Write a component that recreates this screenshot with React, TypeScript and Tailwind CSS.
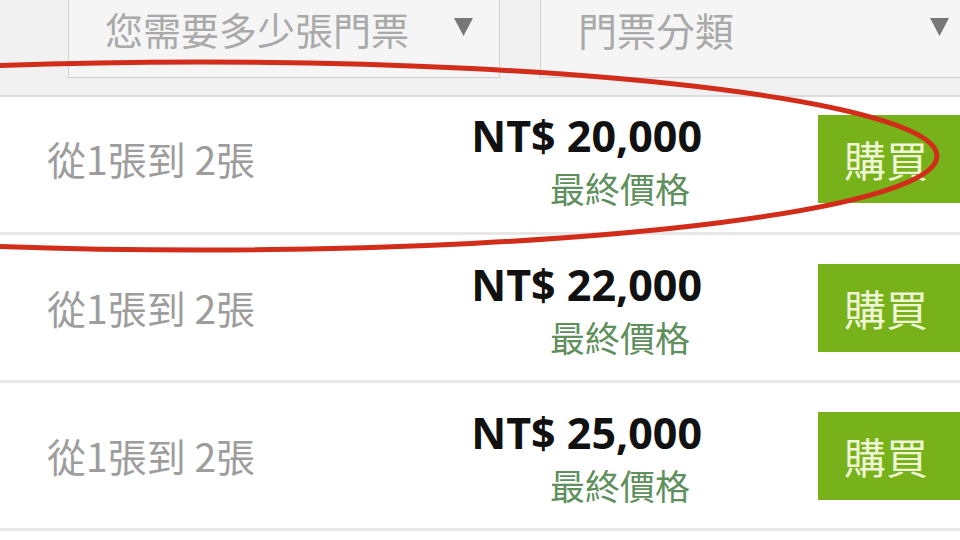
const rows = [
  { range: '從1張到 2張', price: 'NT$ 20,000' },
  { range: '從1張到 2張', price: 'NT$ 22,000' },
  { range: '從1張到 2張', price: 'NT$ 25,000' },
];

const cjk = { fontFamily: '"Noto Sans CJK TC", "Noto Sans", sans-serif' };
const latin = { fontFamily: '"Open Sans", "Noto Sans CJK TC", sans-serif' };

function Caret() {
  return (
    <svg width="21" height="20" viewBox="0 0 21 20" className="shrink-0">
      <polygon points="1,1 20,1 10.5,19" fill="#777" />
    </svg>
  );
}

export default function App() {
  return (
    <div className="relative w-[960px] h-[540px] overflow-hidden bg-white" style={cjk}>
      {/* filters (scrolled so their top edge is off screen) */}
      <div className="h-[97px] bg-[#f1f1f1] border-b-2 border-[#dcdcdc] flex items-start gap-[40px] pl-[68px]">
        <div className="w-[432px] shrink-0 h-[78px] bg-[#f5f5f5] border-x border-b border-[#cfcfcf] flex items-start pl-[36px] pr-[25px] pt-[9px]">
          <span className="text-[38px] text-[#a9a9a9] leading-[40px] flex-1 whitespace-nowrap">您需要多少張門票</span>
          <span className="pt-[8px]">
            <Caret />
          </span>
        </div>
        <div className="w-[440px] shrink-0 h-[78px] bg-[#f5f5f5] border-x border-b border-[#cfcfcf] flex items-start pl-[37px] pr-[29px] pt-[9px]">
          <span className="text-[39px] text-[#a9a9a9] leading-[40px] flex-1">門票分類</span>
          <span className="pt-[8px]">
            <Caret />
          </span>
        </div>
      </div>

      {/* price rows */}
      {rows.map((row, i) => (
        <div
          key={i}
          className={`flex items-center border-b-[3px] border-[#e7e7e7] pl-[47px] ${
            i === 0 ? 'h-[138px] pb-[12px]' : 'h-[148px]'
          }`}
        >
          <span className="text-[39px] text-[#9d9d9d] leading-none flex-1">{row.range}</span>
          <div className="flex flex-col items-end mt-[4px]">
            <span className="text-[43px] font-bold text-[#111] leading-[46px]" style={latin}>
              {row.price}
            </span>
            <span className="text-[35px] text-[#5e8f5c] leading-[40px] mt-[9px] pr-[12px]">最終價格</span>
          </div>
          <div className="ml-[116px] -mr-[20px] w-[162px] h-[88px] shrink-0 bg-[#78b21a] flex items-center pl-[26px]">
            <span className="text-[42px] text-[#eef6d6] leading-none">購買</span>
          </div>
        </div>
      ))}

      {/* hand-drawn highlight */}
      <svg className="absolute inset-0 pointer-events-none" width="960" height="540" viewBox="0 0 960 540">
        <ellipse cx="200" cy="156" rx="737" ry="94" fill="none" stroke="#d22c1a" strokeWidth="5" />
      </svg>
    </div>
  );
}
